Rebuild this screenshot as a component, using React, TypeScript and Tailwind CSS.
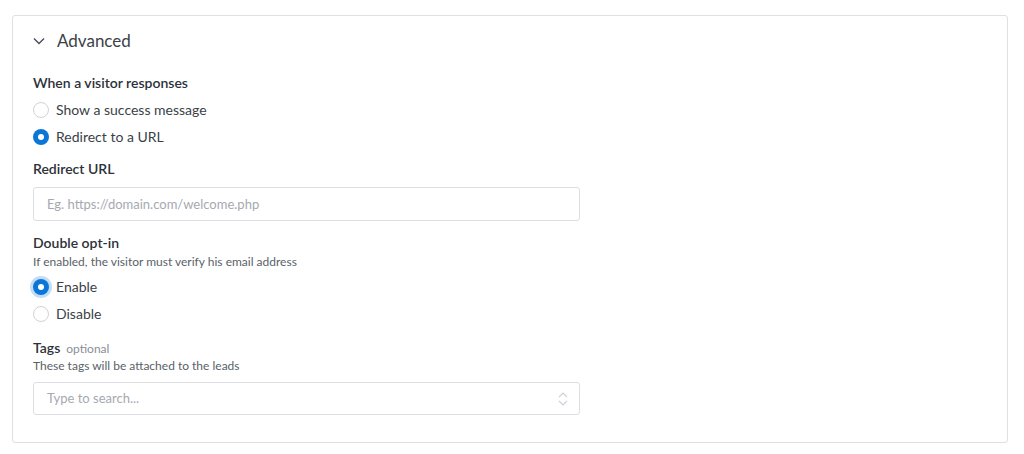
const FONT = "font-['Lato','Noto_Sans',sans-serif]";

function Radio({ label, checked, focused }: { label: string; checked?: boolean; focused?: boolean }) {
  return (
    <label className="flex h-[27px] items-center gap-[7px]">
      <span
        className={
          checked
            ? `flex h-4 w-4 items-center justify-center rounded-full bg-[#0b76d8] ${focused ? "ring-[3px] ring-[#0b76d8]/25" : ""}`
            : "h-4 w-4 rounded-full border border-[#d0d2d8] bg-white"
        }
      >
        {checked && <span className="h-[6px] w-[6px] rounded-full bg-white" />}
      </span>
      <span className="text-[14px] leading-5 text-[#3b3f48]">{label}</span>
    </label>
  );
}

function Label({ children }: { children: React.ReactNode }) {
  return <div className="text-[14px] leading-5 font-semibold text-[#2d3139]">{children}</div>;
}

export default function App() {
  return (
    <div className={`min-h-[454px] bg-white pl-3 pr-4 pt-[15px] ${FONT}`}>
      <div className="h-[428px] rounded-[3px] border border-[#dfe0e4] px-5 pt-[13px]">
        <div className="flex h-6 items-center gap-3">
          <svg width="12" height="8" viewBox="0 0 12 8" fill="none" stroke="#4a4f58" strokeWidth="1.4">
            <path d="M1 1.5 L6 6.5 L11 1.5" />
          </svg>
          <span className="text-[17px] leading-6 text-[#3b3f48]">Advanced</span>
        </div>

        <div className="mt-5">
          <Label>When a visitor responses</Label>
          <div className="mt-[3px]">
            <Radio label="Show a success message" />
            <Radio label="Redirect to a URL" checked />
          </div>
        </div>

        <div className="mt-[9px]">
          <Label>Redirect URL</Label>
          <input
            placeholder="Eg. https://domain.com/welcome.php"
            className="mt-2 h-[34px] w-[547px] rounded-[3px] border border-[#dcdee3] px-[13px] text-[13px] text-[#3b3f48] outline-none placeholder:text-[#a6a9b0]"
          />
        </div>

        <div className="mt-3">
          <Label>Double opt-in</Label>
          <div className="mt-px text-[12px] leading-4 text-[#5a5f68]">If enabled, the visitor must verify his email address</div>
          <div className="mt-[3px]">
            <Radio label="Enable" checked focused />
            <Radio label="Disable" />
          </div>
        </div>

        <div className="mt-[11px]">
          <div className="flex items-baseline gap-[6px]">
            <Label>Tags</Label>
            <span className="text-[12px] leading-4 text-[#8a8e96]">optional</span>
          </div>
          <div className="text-[12px] leading-4 text-[#5a5f68]">These tags will be attached to the leads</div>
          <div className="mt-2 flex h-[33px] w-[547px] items-center justify-between rounded-[3px] border border-[#dcdee3] pl-[13px] pr-[11px]">
            <span className="text-[13px] text-[#a6a9b0]">Type to search...</span>
            <svg width="10" height="16" viewBox="0 0 10 16" fill="none" stroke="#cdd0d5" strokeWidth="1.1">
              <path d="M1 6 L5 2 L9 6" />
              <path d="M1 10 L5 14 L9 10" />
            </svg>
          </div>
        </div>
      </div>
    </div>
  );
}
